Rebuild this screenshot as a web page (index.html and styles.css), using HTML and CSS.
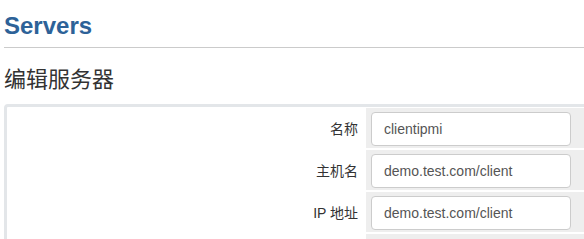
FILE: index.html
```html
<!DOCTYPE html>
<html lang="zh-CN">
<head>
  <meta charset="UTF-8">
  <meta name="viewport" content="width=device-width, initial-scale=1.0">
  <title>Servers</title>
  <link rel="stylesheet" href="styles.css">
</head>
<body>
  <div class="page">
    <h1 class="page-title">Servers</h1>
    <h2 class="section-title">编辑服务器</h2>
    <div class="form-box">
      <div class="form-row">
        <label class="form-label" for="name">名称</label>
        <div class="form-field"><input id="name" class="form-control" type="text" value="clientipmi"></div>
      </div>
      <div class="form-row">
        <label class="form-label" for="host">主机名</label>
        <div class="form-field"><input id="host" class="form-control" type="text" value="demo.test.com/client"></div>
      </div>
      <div class="form-row">
        <label class="form-label" for="ip">IP 地址</label>
        <div class="form-field"><input id="ip" class="form-control" type="text" value="demo.test.com/client"></div>
      </div>
      <div class="form-row">
        <span class="form-label"></span>
        <div class="form-field"></div>
      </div>
    </div>
  </div>
</body>
</html>
```

FILE: styles.css
```css
* {
  box-sizing: border-box;
  margin: 0;
  padding: 0;
}

body {
  font-family: 'Liberation Sans', Arial, 'Noto Sans CJK SC', sans-serif;
  font-size: 14px;
  color: #333;
  background: #fff;
  overflow: hidden;
}

.page {
  padding-left: 4px;
  width: 700px;
}

.page-title {
  margin-top: 13px;
  padding-bottom: 8px;
  border-bottom: 1px solid #cbcbcb;
  font-size: 24px;
  line-height: 26px;
  font-weight: bold;
  color: #2d6298;
}

.section-title {
  margin: 20px 0 12px;
  font-size: 22px;
  line-height: 24px;
  font-weight: normal;
  color: #333;
}

.form-box {
  border: 3px solid #e3e6e9;
  border-radius: 4px;
  padding: 1px 0 0 1px;
  display: flex;
  flex-direction: column;
  gap: 2px;
}

.form-row {
  display: grid;
  grid-template-columns: 356px 1fr;
  column-gap: 2px;
  height: 40px;
}

.form-label {
  display: flex;
  align-items: center;
  justify-content: flex-end;
  padding-right: 6px;
  color: #333;
}

.form-field {
  background: #eee;
  padding: 4px 5px 2px;
}

.form-control {
  display: block;
  width: 200px;
  height: 34px;
  padding: 6px 12px;
  border: 1px solid #ccc;
  border-radius: 4px;
  font-family: inherit;
  font-size: 14px;
  color: #555;
  background: #fff;
}
```
